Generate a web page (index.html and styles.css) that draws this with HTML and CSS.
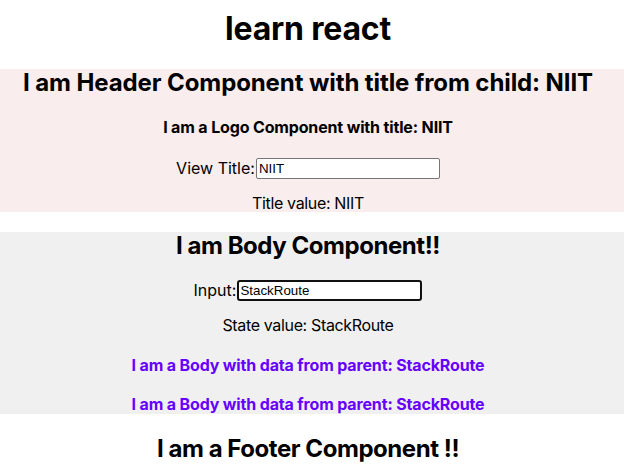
FILE: index.html
```html
<!DOCTYPE html>
<html lang="en">
<head>
<meta charset="utf-8">
<title>learn react</title>
<link rel="stylesheet" href="styles.css">
</head>
<body>
<div class="app">
  <h1 class="title">learn react</h1>
  <div class="header">
    <h2 class="heading">I am Header Component with title from child: NIIT</h2>
    <h4 class="sub">I am a Logo Component with title: NIIT</h4>
    <p class="row"><span class="label">View Title:</span><input class="field" type="text" value="NIIT"></p>
    <p class="row">Title value: NIIT</p>
  </div>
  <div class="body">
    <h2 class="heading tight">I am Body Component!!</h2>
    <p class="row"><span class="label">Input:</span><input class="field focused" type="text" value="StackRoute" autofocus></p>
    <p class="row">State value: StackRoute</p>
    <h4 class="sub purple">I am a Body with data from parent: StackRoute</h4>
    <h4 class="sub purple">I am a Body with data from parent: StackRoute</h4>
  </div>
  <div class="footer">
    <h2 class="heading tight">I am a Footer Component !!</h2>
  </div>
</div>
</body>
</html>
```
FILE: styles.css
```css
html, body {
  margin: 0;
  padding: 0;
  background: #fff;
}
body {
  font-family: Inter, "Noto Sans", sans-serif;
  color: #000;
  line-height: 1.15;
}
.app {
  text-align: center;
  display: flow-root;
}
.title {
  font-size: 32px;
  font-weight: 700;
  letter-spacing: -0.2px;
  margin: 11px 8px 21.4px 0;
}
.header {
  background: #f9eded;
  padding-right: 8px;
}
.body {
  background: #f0f0f0;
  padding-right: 8px;
}
.footer {
  padding-right: 8px;
}
.heading {
  font-size: 24px;
  font-weight: 700;
  letter-spacing: -0.1px;
  margin: 19.9px 0;
}
.heading.tight {
  letter-spacing: -0.45px;
}
.sub {
  font-size: 16px;
  font-weight: 700;
  letter-spacing: -0.15px;
  margin: 21.3px 0;
}
.purple {
  color: #6600ff;
}
.row {
  font-size: 16px;
  line-height: 1.1;
  letter-spacing: -0.35px;
  margin: 16px 0;
}
.label {
  letter-spacing: 0;
  vertical-align: middle;
}
.field {
  box-sizing: border-box;
  width: 184px;
  height: 21px;
  margin: 0 0 0 1px;
  padding: 1px 2px;
  border: 1px solid #767676;
  border-radius: 2px;
  background: #fff;
  font-family: "Liberation Sans", Arial, sans-serif;
  font-size: 13.33px;
  letter-spacing: 0;
  color: #000;
  vertical-align: middle;
  outline: none;
}
.field.focused {
  width: 185px;
  border: 2px solid #101010;
  border-radius: 3px;
  padding: 0 1px;
}
```
